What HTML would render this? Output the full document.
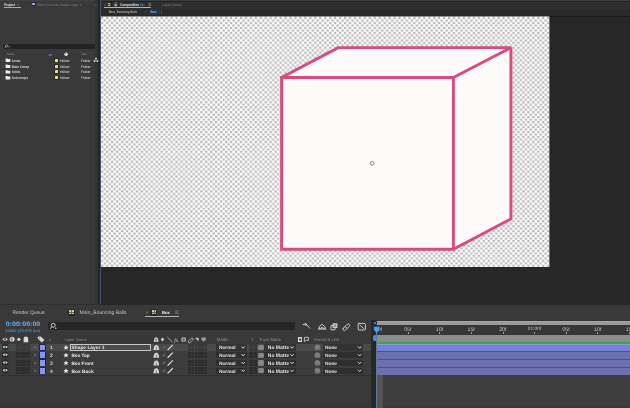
<!DOCTYPE html>
<html><head><meta charset="utf-8">
<style>
*{margin:0;padding:0;box-sizing:border-box}
html,body{width:630px;height:408px;overflow:hidden;background:#1d1d1d;font-family:"Liberation Sans",sans-serif;position:relative}
.a{position:absolute}
svg.a{overflow:visible}
.t{position:absolute;white-space:nowrap}
</style></head><body>
<div class="a" style="left:0px;top:0px;width:101px;height:305px;background:#2f2f2f;"></div>
<div class="a" style="left:0px;top:0px;width:96.5px;height:304px;background:#393939;"></div>
<div class="a" style="left:0px;top:0px;width:96.5px;height:1px;background:#424242;"></div>
<div class="a" style="left:3.5px;top:7px;width:17px;height:0.9px;background:#a8a8a8;"></div>
<div class="a" style="left:31.6px;top:1.9px;width:4px;height:4.1px;background:#23233c;border-radius:0.8px"></div>
<div class="a" style="left:32.3px;top:2.6px;width:2.6px;height:2.7px;background:#a8a8f0;border-radius:0.4px"></div>
<div class="a" style="left:2.6px;top:43.5px;width:94px;height:5.2px;background:#232323;border-radius:2px"></div>
<svg class="a" style="left:0;top:0" width="630" height="408" viewBox="0 0 630 408"><g fill="none" stroke="#c8c8c8" stroke-width="0.6"><circle cx="6.6" cy="45.9" r="1.2"/><path d="M5.8 46.8 L4.8 47.9"/></g><path d="M8.2 46.6 h1.8 l-0.9 0.9z" fill="#c8c8c8"/></svg>
<svg class="a" style="left:0;top:0" width="630" height="408" viewBox="0 0 630 408"><path d="M47.8 55.4 Q50.2 52.4 52.6 55.4z" fill="#5d86c8"/><circle cx="66.1" cy="54.3" r="1.8" fill="#e6e6e6"/><circle cx="65.4" cy="53.8" r="0.5" fill="#383838"/></svg>
<svg class="a" style="left:0;top:0" width="630" height="408" viewBox="0 0 630 408"><path d="M2.2 59.3 L3.2 60.3 L2.2 61.3" fill="none" stroke="#777" stroke-width="0.5"/></svg>
<svg class="a" style="left:0;top:0" width="630" height="408" viewBox="0 0 630 408"><path d="M5.6 58.599999999999994 h1.8 l0.5 0.5 h2.4 v2.9 h-4.7z" fill="#ececec"/></svg>
<div class="a" style="left:54.2px;top:58.099999999999994px;width:4.4px;height:4.4px;background:#26261c;border-radius:0.8px"></div>
<div class="a" style="left:54.8px;top:58.699999999999996px;width:3.2px;height:3.2px;background:#ece47c;border-radius:0.4px"></div>
<svg class="a" style="left:0;top:0" width="630" height="408" viewBox="0 0 630 408"><path d="M2.2 65.2 L3.2 66.2 L2.2 67.2" fill="none" stroke="#777" stroke-width="0.5"/></svg>
<svg class="a" style="left:0;top:0" width="630" height="408" viewBox="0 0 630 408"><path d="M5.6 64.5 h1.8 l0.5 0.5 h2.4 v2.9 h-4.7z" fill="#ececec"/></svg>
<div class="a" style="left:54.2px;top:64.0px;width:4.4px;height:4.4px;background:#26261c;border-radius:0.8px"></div>
<div class="a" style="left:54.8px;top:64.60000000000001px;width:3.2px;height:3.2px;background:#ece47c;border-radius:0.4px"></div>
<svg class="a" style="left:0;top:0" width="630" height="408" viewBox="0 0 630 408"><path d="M2.2 70.9 L3.2 71.9 L2.2 72.9" fill="none" stroke="#777" stroke-width="0.5"/></svg>
<svg class="a" style="left:0;top:0" width="630" height="408" viewBox="0 0 630 408"><path d="M5.6 70.2 h1.8 l0.5 0.5 h2.4 v2.9 h-4.7z" fill="#ececec"/></svg>
<div class="a" style="left:54.2px;top:69.7px;width:4.4px;height:4.4px;background:#26261c;border-radius:0.8px"></div>
<div class="a" style="left:54.8px;top:70.30000000000001px;width:3.2px;height:3.2px;background:#ece47c;border-radius:0.4px"></div>
<svg class="a" style="left:0;top:0" width="630" height="408" viewBox="0 0 630 408"><path d="M2.2 76.8 L3.2 77.8 L2.2 78.8" fill="none" stroke="#777" stroke-width="0.5"/></svg>
<svg class="a" style="left:0;top:0" width="630" height="408" viewBox="0 0 630 408"><path d="M5.6 76.1 h1.8 l0.5 0.5 h2.4 v2.9 h-4.7z" fill="#ececec"/></svg>
<div class="a" style="left:54.2px;top:75.6px;width:4.4px;height:4.4px;background:#26261c;border-radius:0.8px"></div>
<div class="a" style="left:54.8px;top:76.2px;width:3.2px;height:3.2px;background:#ece47c;border-radius:0.4px"></div>
<div class="a" style="left:95.2px;top:0px;width:3px;height:304px;background:#333333;"></div>
<div class="a" style="left:98.2px;top:0px;width:1.4px;height:304px;background:#1e2430;"></div>
<div class="a" style="left:99.6px;top:0px;width:1.6px;height:304px;background:#4a5468;"></div>
<svg class="a" style="left:0;top:0" width="630" height="408" viewBox="0 0 630 408"><g fill="#d8d8d8"><circle cx="96" cy="58.3" r="0.9"/><circle cx="94.5" cy="61" r="0.9"/><circle cx="97.5" cy="61" r="0.9"/></g><path d="M96 58.3 L94.5 61 L97.5 61z" fill="none" stroke="#d8d8d8" stroke-width="0.4"/></svg>
<div class="a" style="left:101px;top:0px;width:529px;height:305px;background:#272727;"></div>
<div class="a" style="left:101.2px;top:16px;width:1.3px;height:289px;background:#20242c;"></div>
<div class="a" style="left:101px;top:0px;width:529px;height:8.6px;background:#2f2f2f;"></div>
<div class="a" style="left:101px;top:0px;width:529px;height:1.1px;background:#3a3d42;"></div>
<div class="a" style="left:101px;top:1.1px;width:529px;height:0.9px;background:#232323;"></div>
<div class="a" style="left:101px;top:8.6px;width:529px;height:7px;background:#2a2a2a;"></div>
<div class="a" style="left:101px;top:15.6px;width:529px;height:0.9px;background:#171717;"></div>
<div class="a" style="left:107.8px;top:2.3px;width:4.2px;height:4.2px;background:#25231e;border-radius:0.8px"></div>
<div class="a" style="left:108.4px;top:2.9px;width:3px;height:3px;background:#bdb8a6;"></div>
<div class="a" style="left:109.75px;top:2.9px;width:0.3px;height:3px;background:#5a5548;"></div>
<div class="a" style="left:108.4px;top:4.25px;width:3px;height:0.3px;background:#5a5548;"></div>
<svg class="a" style="left:0;top:0" width="630" height="408" viewBox="0 0 630 408"><rect x="114.4" y="3.9" width="2.8" height="2.3" rx="0.3" fill="#9a9a9a"/><path d="M114.9 4 v-0.8 a0.9 0.9 0 0 1 1.8 0 v0.8" fill="none" stroke="#9a9a9a" stroke-width="0.5"/></svg>
<svg class="a" style="left:0;top:0" width="630" height="408" viewBox="0 0 630 408"><g stroke="#9a9a9a" stroke-width="0.5"><path d="M148.3 3.3 h2.8 M148.3 4.4 h2.8 M148.3 5.5 h2.8"/></g></svg>
<div class="a" style="left:104px;top:7px;width:47px;height:0.9px;background:#b4b4b4;"></div>
<div class="a" style="left:149px;top:9.6px;width:10.8px;height:4.4px;background:#1d3652;"></div>
<div class="a" style="left:160.6px;top:9.9px;width:0.7px;height:4px;background:#4a4a4a;"></div>
<svg class="a" style="left:0;top:0" width="630" height="408" viewBox="0 0 630 408"><defs><pattern id="ck" patternUnits="userSpaceOnUse" x="101.115" y="16.965" width="4.955" height="4.955"><rect x="0" y="0" width="2.25" height="2.25" fill="#b8b8b8"/><rect x="2.4775" y="2.4775" width="2.25" height="2.25" fill="#b8b8b8"/></pattern></defs><rect x="101" y="16.5" width="448.3" height="250.5" fill="#fefefe"/><rect x="101" y="16.5" width="448.3" height="250.5" fill="url(#ck)"/><polygon points="281.6,77.5 338.2,47.6 510.9,47.6 510.9,218.8 453.4,249.2 281.6,249.2" fill="#fcfbf9"/><g fill="none" stroke="#d84a80" stroke-width="2.9" stroke-linejoin="miter"><polygon points="281.6,77.5 453.4,77.5 453.4,249.2 281.6,249.2"/><polyline points="281.6,77.5 338.2,47.6 510.9,47.6 453.4,77.5"/><polyline points="510.9,47.6 510.9,218.8 453.4,249.2"/></g><circle cx="453.4" cy="77.4" r="0.9" fill="#8a6ad0"/><circle cx="510.9" cy="47.6" r="0.9" fill="#8a6ad0"/><circle cx="372.2" cy="163.3" r="1.8" fill="none" stroke="#6a6a6a" stroke-width="0.8"/></svg>
<div class="a" style="left:0px;top:305px;width:630px;height:103px;background:#393939;"></div>
<div class="a" style="left:67.8px;top:308.5px;width:7.4px;height:7.4px;background:#2a2720;border-radius:1.5px"></div>
<div class="a" style="left:69.2px;top:309.9px;width:4.6px;height:4.6px;background:#dcd2a6;border-radius:0.4px"></div>
<div class="a" style="left:71.35px;top:309.9px;width:0.3px;height:4.6px;background:#6a6450;"></div>
<div class="a" style="left:69.2px;top:312.05px;width:4.6px;height:0.3px;background:#6a6450;"></div>
<div class="a" style="left:150.3px;top:308.5px;width:7px;height:7px;background:#2a2720;border-radius:1.5px"></div>
<div class="a" style="left:151.6px;top:309.8px;width:4.4px;height:4.4px;background:#dcd2a6;border-radius:0.4px"></div>
<div class="a" style="left:153.65px;top:309.8px;width:0.3px;height:4.4px;background:#6a6450;"></div>
<div class="a" style="left:151.6px;top:311.85px;width:4.4px;height:0.3px;background:#6a6450;"></div>
<svg class="a" style="left:0;top:0" width="630" height="408" viewBox="0 0 630 408"><g stroke="#8a8a8a" stroke-width="0.6"><path d="M175 310.8 h3.6 M175 312.2 h3.6 M175 313.6 h3.6"/></g></svg>
<div class="a" style="left:145px;top:316.2px;width:34px;height:0.9px;background:#b4b4b4;"></div>
<div class="a" style="left:47.6px;top:321.8px;width:247.6px;height:8.4px;background:#262626;border-radius:1.5px"></div>
<svg class="a" style="left:0;top:0" width="630" height="408" viewBox="0 0 630 408"><g fill="none" stroke="#d8d8d8" stroke-width="0.9"><circle cx="53.2" cy="325.3" r="2"/><path d="M51.8 326.8 L50 328.8"/></g><circle cx="55.8" cy="328.2" r="0.7" fill="#d8d8d8"/></svg>
<svg class="a" style="left:0;top:0" width="630" height="408" viewBox="0 0 630 408"><g fill="none" stroke="#cdcdcd" stroke-width="1" stroke-linecap="round" stroke-linejoin="round"><path d="M303 324.4 h3.6 M305.2 323.4 l1.6 1 l-1 1.2 M306.6 324.6 l3.2 3.6"/><path d="M318.4 329 h7.4 M319.2 329 v-2.2 l2.9 -2.6 l2.9 2.6 v2.2 M320.7 328.8 a1.4 1.4 0 0 1 2.8 0"/><rect x="330.9" y="325.6" width="4.2" height="4.2" rx="0.5"/><path d="M343.4 328.2 L347.2 324.4 a1.4 1.4 0 0 1 2 2 L345.4 330.2 a1.4 1.4 0 0 1 -2 -2z M345.3 326.6 l1.5 1.5"/><rect x="358.2" y="323.4" width="7.2" height="6.6" rx="0.8"/><path d="M360 325.2 L363.6 328.4"/></g><rect x="332.6" y="323.3" width="4.8" height="4.6" rx="0.5" fill="#cdcdcd"/><path d="M333.6 325 h2.6 M333.6 326.3 h2.6" stroke="#373737" stroke-width="0.5"/></svg>
<svg class="a" style="left:0;top:0" width="630" height="408" viewBox="0 0 630 408"><g fill="#d8d8d8"><path d="M2.3 339.3 Q5.1 336.2 7.9 339.3 Q5.1 342.4 2.3 339.3z"/><circle cx="12.1" cy="339.3" r="2.5"/><circle cx="18.8" cy="339.3" r="1.6"/><path d="M23.6 342.2 v-3.4 a2.3 2.3 0 0 1 4.6 0 v3.4z"/><path d="M37.4 337.6 l1.2 -1.2 h2.2 l3.6 3.6 l-2.6 2.6 l-3.6 -3.6z"/></g><circle cx="5.1" cy="339.3" r="1" fill="#373737"/><path d="M12.1 337.2 v4.2" stroke="#373737" stroke-width="0.6"/><path d="M12.1 337.4 a1.9 1.9 0 0 0 0 3.8z" fill="#9a9a9a"/><circle cx="39.6" cy="337.9" r="0.5" fill="#373737"/></svg>
<div class="a" style="left:60px;top:336px;width:92.5px;height:7px;background:#363636;"></div>
<svg class="a" style="left:0;top:0" width="630" height="408" viewBox="0 0 630 408"><g fill="#c8c8c8"><path d="M153.9 341.9 Q154 337.2 156.2 337.2 Q158.4 337.2 158.5 341.9z"/><path d="M160.6 339.5 l1.9 -1.9 l1.9 1.9 l-1.9 1.9z"/><rect x="181.5" y="337.4" width="4.2" height="4.2" rx="0.4"/><path d="M201.4 337.4 h4.6 v2.2 l-2.3 2.3 l-2.3 -2.3z" fill="#9a9a9a"/><circle cx="196.8" cy="339.5" r="2.1"/></g><path d="M156.2 339 v2.9" stroke="#383838" stroke-width="0.6"/><rect x="182.5" y="338.4" width="2.2" height="2.2" fill="#555"/><path d="M195.3 338 a2.1 2.1 0 0 0 3 3z" fill="#383838"/><g fill="none" stroke="#c8c8c8" stroke-width="0.75"><path d="M167.4 337.2 L172.4 342"/><path d="M188.6 341 l2.6 -2.6 a1.1 1.1 0 0 1 1.6 1.6 l-2.6 2.6 a1.1 1.1 0 0 1 -1.6 -1.6z"/></g></svg>
<div class="a" style="left:298px;top:337.4px;width:4.4px;height:4.4px;background:#dadada;border:0.8px solid #dadada"></div>
<svg class="a" style="left:0;top:0" width="630" height="408" viewBox="0 0 630 408"><rect x="299.2" y="338.6" width="2" height="2" fill="#373737"/><path d="M304.4 342 v-4.6 h4 v3 h-3" fill="none" stroke="#dadada" stroke-width="0.8"/></svg>
<div class="a" style="left:0px;top:343.6px;width:372px;height:7.7px;background:#4a4a4a;"></div>
<div class="a" style="left:0px;top:351.3px;width:372px;height:0.6px;background:#303030;"></div>
<svg class="a" style="left:0;top:0" width="630" height="408" viewBox="0 0 630 408"><circle cx="5.2" cy="347.05000000000007" r="3.2" fill="#262626"/><path d="M2.6 347.05000000000007 Q5.2 344.55000000000007 7.8 347.05000000000007 Q5.2 349.55000000000007 2.6 347.05000000000007z" fill="#e4e4e4"/><ellipse cx="5.2" cy="347.05000000000007" rx="0.55" ry="1.2" fill="#222"/></svg>
<div class="a" style="left:16px;top:344.1px;width:6.5px;height:6.7px;background:#383838;"></div>
<div class="a" style="left:19.0px;top:344.1px;width:0.5px;height:6.7px;background:#414141;"></div>
<div class="a" style="left:16px;top:347.20000000000005px;width:6.5px;height:0.5px;background:#414141;"></div>
<div class="a" style="left:23px;top:344.1px;width:6.5px;height:6.7px;background:#383838;"></div>
<div class="a" style="left:26.0px;top:344.1px;width:0.5px;height:6.7px;background:#414141;"></div>
<div class="a" style="left:23px;top:347.20000000000005px;width:6.5px;height:0.5px;background:#414141;"></div>
<svg class="a" style="left:0;top:0" width="630" height="408" viewBox="0 0 630 408"><path d="M34.6 346.15000000000003 L35.9 347.45000000000005 L34.6 348.75000000000006" fill="none" stroke="#9a9a9a" stroke-width="0.7"/></svg>
<div class="a" style="left:39.2px;top:343.90000000000003px;width:6.6px;height:7.1px;background:#23233a;border-radius:0.5px"></div>
<div class="a" style="left:39.9px;top:344.6px;width:5.2px;height:5.7px;background:#8494fa;"></div>
<svg class="a" style="left:0;top:0" width="630" height="408" viewBox="0 0 630 408"><path d="M66 344.95000000000005 L66.8 346.65000000000003 L68.6 346.75000000000006 L67.2 347.95000000000005 L67.7 349.85 L66 348.85 L64.3 349.85 L64.8 347.95000000000005 L63.4 346.75000000000006 L65.2 346.65000000000003z" fill="#e6e6e6"/></svg>
<div class="a" style="left:70px;top:344.20000000000005px;width:80.7px;height:6.6px;background:#4a4a4a;border:0.75px solid #c8c8c8"></div>
<svg class="a" style="left:0;top:0" width="630" height="408" viewBox="0 0 630 408"><g fill="#d6d6d6"><path d="M153.5 350.05000000000007 Q153.7 345.05000000000007 156.3 345.05000000000007 Q158.9 345.05000000000007 159.1 350.05000000000007z"/></g><path d="M156.3 346.85 v3" stroke="#4a4a4a" stroke-width="0.6"/><path d="M161.8 347.45000000000005 l2.2 -2 l2.2 2 l-2.2 2z" fill="#585858"/><path d="M167.6 350.05000000000007 L172.8 344.95000000000005" stroke="#e6e6e6" stroke-width="1.1"/></svg>
<div class="a" style="left:188.2px;top:344.1px;width:6.2px;height:6.7px;background:#383838;"></div>
<div class="a" style="left:191.04999999999998px;top:344.1px;width:0.5px;height:6.7px;background:#414141;"></div>
<div class="a" style="left:188.2px;top:347.20000000000005px;width:6.2px;height:0.5px;background:#414141;"></div>
<div class="a" style="left:194.6px;top:344.1px;width:6.2px;height:6.7px;background:#383838;"></div>
<div class="a" style="left:197.45px;top:344.1px;width:0.5px;height:6.7px;background:#414141;"></div>
<div class="a" style="left:194.6px;top:347.20000000000005px;width:6.2px;height:0.5px;background:#414141;"></div>
<div class="a" style="left:201px;top:344.1px;width:6.2px;height:6.7px;background:#383838;"></div>
<div class="a" style="left:203.85px;top:344.1px;width:0.5px;height:6.7px;background:#414141;"></div>
<div class="a" style="left:201px;top:347.20000000000005px;width:6.2px;height:0.5px;background:#414141;"></div>
<div class="a" style="left:216px;top:344.3px;width:30.8px;height:6.3px;background:#333;border-radius:0.6px"></div>
<svg class="a" style="left:0;top:0" width="630" height="408" viewBox="0 0 630 408"><path d="M241.5 346.45000000000005 L243.2 348.25000000000006 L244.9 346.45000000000005" fill="none" stroke="#dcdcdc" stroke-width="1"/></svg>
<div class="a" style="left:248.6px;top:344.1px;width:8.6px;height:6.7px;background:#383838;"></div>
<div class="a" style="left:252.65px;top:344.1px;width:0.5px;height:6.7px;background:#414141;"></div>
<div class="a" style="left:248.6px;top:347.20000000000005px;width:8.6px;height:0.5px;background:#414141;"></div>
<div class="a" style="left:258.4px;top:344.90000000000003px;width:5.4px;height:5.2px;background:#808080;border-radius:1.2px"></div>
<svg class="a" style="left:0;top:0" width="630" height="408" viewBox="0 0 630 408"><circle cx="261.1" cy="347.45000000000005" r="1.3" fill="none" stroke="#a0a0a0" stroke-width="0.5"/></svg>
<div class="a" style="left:263.8px;top:344.3px;width:32px;height:6.3px;background:#333;border-radius:0.6px"></div>
<svg class="a" style="left:0;top:0" width="630" height="408" viewBox="0 0 630 408"><path d="M290.3 346.45000000000005 L292 348.25000000000006 L293.7 346.45000000000005" fill="none" stroke="#dcdcdc" stroke-width="1"/></svg>
<svg class="a" style="left:0;top:0" width="630" height="408" viewBox="0 0 630 408"><circle cx="317.4" cy="347.45000000000005" r="2.9" fill="#747474"/><path d="M316 347.85 a1.5 1.5 0 1 1 2.4 1" fill="none" stroke="#9a9a9a" stroke-width="0.6"/></svg>
<div class="a" style="left:322.8px;top:344.3px;width:40.6px;height:6.3px;background:#333;border-radius:0.6px"></div>
<svg class="a" style="left:0;top:0" width="630" height="408" viewBox="0 0 630 408"><path d="M357.9 346.45000000000005 L359.6 348.25000000000006 L361.3 346.45000000000005" fill="none" stroke="#dcdcdc" stroke-width="1"/></svg>
<div class="a" style="left:0px;top:351.3px;width:372px;height:7.7px;background:#3c3c3c;"></div>
<div class="a" style="left:0px;top:359.0px;width:372px;height:0.6px;background:#303030;"></div>
<svg class="a" style="left:0;top:0" width="630" height="408" viewBox="0 0 630 408"><circle cx="5.2" cy="354.75000000000006" r="3.2" fill="#262626"/><path d="M2.6 354.75000000000006 Q5.2 352.25000000000006 7.8 354.75000000000006 Q5.2 357.25000000000006 2.6 354.75000000000006z" fill="#e4e4e4"/><ellipse cx="5.2" cy="354.75000000000006" rx="0.55" ry="1.2" fill="#222"/></svg>
<div class="a" style="left:16px;top:351.8px;width:6.5px;height:6.7px;background:#2d2d2d;"></div>
<div class="a" style="left:19.0px;top:351.8px;width:0.5px;height:6.7px;background:#343434;"></div>
<div class="a" style="left:16px;top:354.90000000000003px;width:6.5px;height:0.5px;background:#343434;"></div>
<div class="a" style="left:23px;top:351.8px;width:6.5px;height:6.7px;background:#2d2d2d;"></div>
<div class="a" style="left:26.0px;top:351.8px;width:0.5px;height:6.7px;background:#343434;"></div>
<div class="a" style="left:23px;top:354.90000000000003px;width:6.5px;height:0.5px;background:#343434;"></div>
<svg class="a" style="left:0;top:0" width="630" height="408" viewBox="0 0 630 408"><path d="M34.6 353.85 L35.9 355.15000000000003 L34.6 356.45000000000005" fill="none" stroke="#9a9a9a" stroke-width="0.7"/></svg>
<div class="a" style="left:39.2px;top:351.6px;width:6.6px;height:7.1px;background:#23233a;border-radius:0.5px"></div>
<div class="a" style="left:39.9px;top:352.3px;width:5.2px;height:5.7px;background:#8494fa;"></div>
<svg class="a" style="left:0;top:0" width="630" height="408" viewBox="0 0 630 408"><path d="M66 352.65000000000003 L66.8 354.35 L68.6 354.45000000000005 L67.2 355.65000000000003 L67.7 357.55 L66 356.55 L64.3 357.55 L64.8 355.65000000000003 L63.4 354.45000000000005 L65.2 354.35z" fill="#e6e6e6"/></svg>
<svg class="a" style="left:0;top:0" width="630" height="408" viewBox="0 0 630 408"><g fill="#d6d6d6"><path d="M153.5 357.75000000000006 Q153.7 352.75000000000006 156.3 352.75000000000006 Q158.9 352.75000000000006 159.1 357.75000000000006z"/></g><path d="M156.3 354.55 v3" stroke="#3c3c3c" stroke-width="0.6"/><path d="M161.8 355.15000000000003 l2.2 -2 l2.2 2 l-2.2 2z" fill="#585858"/><path d="M167.6 357.75000000000006 L172.8 352.65000000000003" stroke="#e6e6e6" stroke-width="1.1"/></svg>
<div class="a" style="left:188.2px;top:351.8px;width:6.2px;height:6.7px;background:#2d2d2d;"></div>
<div class="a" style="left:191.04999999999998px;top:351.8px;width:0.5px;height:6.7px;background:#343434;"></div>
<div class="a" style="left:188.2px;top:354.90000000000003px;width:6.2px;height:0.5px;background:#343434;"></div>
<div class="a" style="left:194.6px;top:351.8px;width:6.2px;height:6.7px;background:#2d2d2d;"></div>
<div class="a" style="left:197.45px;top:351.8px;width:0.5px;height:6.7px;background:#343434;"></div>
<div class="a" style="left:194.6px;top:354.90000000000003px;width:6.2px;height:0.5px;background:#343434;"></div>
<div class="a" style="left:201px;top:351.8px;width:6.2px;height:6.7px;background:#2d2d2d;"></div>
<div class="a" style="left:203.85px;top:351.8px;width:0.5px;height:6.7px;background:#343434;"></div>
<div class="a" style="left:201px;top:354.90000000000003px;width:6.2px;height:0.5px;background:#343434;"></div>
<div class="a" style="left:216px;top:352.0px;width:30.8px;height:6.3px;background:#2e2e2e;border-radius:0.6px"></div>
<svg class="a" style="left:0;top:0" width="630" height="408" viewBox="0 0 630 408"><path d="M241.5 354.15000000000003 L243.2 355.95000000000005 L244.9 354.15000000000003" fill="none" stroke="#dcdcdc" stroke-width="1"/></svg>
<div class="a" style="left:248.6px;top:351.8px;width:8.6px;height:6.7px;background:#2d2d2d;"></div>
<div class="a" style="left:252.65px;top:351.8px;width:0.5px;height:6.7px;background:#343434;"></div>
<div class="a" style="left:248.6px;top:354.90000000000003px;width:8.6px;height:0.5px;background:#343434;"></div>
<div class="a" style="left:258.4px;top:352.6px;width:5.4px;height:5.2px;background:#808080;border-radius:1.2px"></div>
<svg class="a" style="left:0;top:0" width="630" height="408" viewBox="0 0 630 408"><circle cx="261.1" cy="355.15000000000003" r="1.3" fill="none" stroke="#a0a0a0" stroke-width="0.5"/></svg>
<div class="a" style="left:263.8px;top:352.0px;width:32px;height:6.3px;background:#2e2e2e;border-radius:0.6px"></div>
<svg class="a" style="left:0;top:0" width="630" height="408" viewBox="0 0 630 408"><path d="M290.3 354.15000000000003 L292 355.95000000000005 L293.7 354.15000000000003" fill="none" stroke="#dcdcdc" stroke-width="1"/></svg>
<svg class="a" style="left:0;top:0" width="630" height="408" viewBox="0 0 630 408"><circle cx="317.4" cy="355.15000000000003" r="2.9" fill="#747474"/><path d="M316 355.55 a1.5 1.5 0 1 1 2.4 1" fill="none" stroke="#9a9a9a" stroke-width="0.6"/></svg>
<div class="a" style="left:322.8px;top:352.0px;width:40.6px;height:6.3px;background:#2e2e2e;border-radius:0.6px"></div>
<svg class="a" style="left:0;top:0" width="630" height="408" viewBox="0 0 630 408"><path d="M357.9 354.15000000000003 L359.6 355.95000000000005 L361.3 354.15000000000003" fill="none" stroke="#dcdcdc" stroke-width="1"/></svg>
<div class="a" style="left:0px;top:359.1px;width:372px;height:7.7px;background:#3c3c3c;"></div>
<div class="a" style="left:0px;top:366.8px;width:372px;height:0.6px;background:#303030;"></div>
<svg class="a" style="left:0;top:0" width="630" height="408" viewBox="0 0 630 408"><circle cx="5.2" cy="362.55000000000007" r="3.2" fill="#262626"/><path d="M2.6 362.55000000000007 Q5.2 360.05000000000007 7.8 362.55000000000007 Q5.2 365.05000000000007 2.6 362.55000000000007z" fill="#e4e4e4"/><ellipse cx="5.2" cy="362.55000000000007" rx="0.55" ry="1.2" fill="#222"/></svg>
<div class="a" style="left:16px;top:359.6px;width:6.5px;height:6.7px;background:#2d2d2d;"></div>
<div class="a" style="left:19.0px;top:359.6px;width:0.5px;height:6.7px;background:#343434;"></div>
<div class="a" style="left:16px;top:362.70000000000005px;width:6.5px;height:0.5px;background:#343434;"></div>
<div class="a" style="left:23px;top:359.6px;width:6.5px;height:6.7px;background:#2d2d2d;"></div>
<div class="a" style="left:26.0px;top:359.6px;width:0.5px;height:6.7px;background:#343434;"></div>
<div class="a" style="left:23px;top:362.70000000000005px;width:6.5px;height:0.5px;background:#343434;"></div>
<svg class="a" style="left:0;top:0" width="630" height="408" viewBox="0 0 630 408"><path d="M34.6 361.65000000000003 L35.9 362.95000000000005 L34.6 364.25000000000006" fill="none" stroke="#9a9a9a" stroke-width="0.7"/></svg>
<div class="a" style="left:39.2px;top:359.40000000000003px;width:6.6px;height:7.1px;background:#23233a;border-radius:0.5px"></div>
<div class="a" style="left:39.9px;top:360.1px;width:5.2px;height:5.7px;background:#8494fa;"></div>
<svg class="a" style="left:0;top:0" width="630" height="408" viewBox="0 0 630 408"><path d="M66 360.45000000000005 L66.8 362.15000000000003 L68.6 362.25000000000006 L67.2 363.45000000000005 L67.7 365.35 L66 364.35 L64.3 365.35 L64.8 363.45000000000005 L63.4 362.25000000000006 L65.2 362.15000000000003z" fill="#e6e6e6"/></svg>
<svg class="a" style="left:0;top:0" width="630" height="408" viewBox="0 0 630 408"><g fill="#d6d6d6"><path d="M153.5 365.55000000000007 Q153.7 360.55000000000007 156.3 360.55000000000007 Q158.9 360.55000000000007 159.1 365.55000000000007z"/></g><path d="M156.3 362.35 v3" stroke="#3c3c3c" stroke-width="0.6"/><path d="M161.8 362.95000000000005 l2.2 -2 l2.2 2 l-2.2 2z" fill="#585858"/><path d="M167.6 365.55000000000007 L172.8 360.45000000000005" stroke="#e6e6e6" stroke-width="1.1"/></svg>
<div class="a" style="left:188.2px;top:359.6px;width:6.2px;height:6.7px;background:#2d2d2d;"></div>
<div class="a" style="left:191.04999999999998px;top:359.6px;width:0.5px;height:6.7px;background:#343434;"></div>
<div class="a" style="left:188.2px;top:362.70000000000005px;width:6.2px;height:0.5px;background:#343434;"></div>
<div class="a" style="left:194.6px;top:359.6px;width:6.2px;height:6.7px;background:#2d2d2d;"></div>
<div class="a" style="left:197.45px;top:359.6px;width:0.5px;height:6.7px;background:#343434;"></div>
<div class="a" style="left:194.6px;top:362.70000000000005px;width:6.2px;height:0.5px;background:#343434;"></div>
<div class="a" style="left:201px;top:359.6px;width:6.2px;height:6.7px;background:#2d2d2d;"></div>
<div class="a" style="left:203.85px;top:359.6px;width:0.5px;height:6.7px;background:#343434;"></div>
<div class="a" style="left:201px;top:362.70000000000005px;width:6.2px;height:0.5px;background:#343434;"></div>
<div class="a" style="left:216px;top:359.8px;width:30.8px;height:6.3px;background:#2e2e2e;border-radius:0.6px"></div>
<svg class="a" style="left:0;top:0" width="630" height="408" viewBox="0 0 630 408"><path d="M241.5 361.95000000000005 L243.2 363.75000000000006 L244.9 361.95000000000005" fill="none" stroke="#dcdcdc" stroke-width="1"/></svg>
<div class="a" style="left:248.6px;top:359.6px;width:8.6px;height:6.7px;background:#2d2d2d;"></div>
<div class="a" style="left:252.65px;top:359.6px;width:0.5px;height:6.7px;background:#343434;"></div>
<div class="a" style="left:248.6px;top:362.70000000000005px;width:8.6px;height:0.5px;background:#343434;"></div>
<div class="a" style="left:258.4px;top:360.40000000000003px;width:5.4px;height:5.2px;background:#808080;border-radius:1.2px"></div>
<svg class="a" style="left:0;top:0" width="630" height="408" viewBox="0 0 630 408"><circle cx="261.1" cy="362.95000000000005" r="1.3" fill="none" stroke="#a0a0a0" stroke-width="0.5"/></svg>
<div class="a" style="left:263.8px;top:359.8px;width:32px;height:6.3px;background:#2e2e2e;border-radius:0.6px"></div>
<svg class="a" style="left:0;top:0" width="630" height="408" viewBox="0 0 630 408"><path d="M290.3 361.95000000000005 L292 363.75000000000006 L293.7 361.95000000000005" fill="none" stroke="#dcdcdc" stroke-width="1"/></svg>
<svg class="a" style="left:0;top:0" width="630" height="408" viewBox="0 0 630 408"><circle cx="317.4" cy="362.95000000000005" r="2.9" fill="#747474"/><path d="M316 363.35 a1.5 1.5 0 1 1 2.4 1" fill="none" stroke="#9a9a9a" stroke-width="0.6"/></svg>
<div class="a" style="left:322.8px;top:359.8px;width:40.6px;height:6.3px;background:#2e2e2e;border-radius:0.6px"></div>
<svg class="a" style="left:0;top:0" width="630" height="408" viewBox="0 0 630 408"><path d="M357.9 361.95000000000005 L359.6 363.75000000000006 L361.3 361.95000000000005" fill="none" stroke="#dcdcdc" stroke-width="1"/></svg>
<div class="a" style="left:0px;top:366.9px;width:372px;height:7.7px;background:#3c3c3c;"></div>
<div class="a" style="left:0px;top:374.59999999999997px;width:372px;height:0.6px;background:#303030;"></div>
<svg class="a" style="left:0;top:0" width="630" height="408" viewBox="0 0 630 408"><circle cx="5.2" cy="370.35" r="3.2" fill="#262626"/><path d="M2.6 370.35 Q5.2 367.85 7.8 370.35 Q5.2 372.85 2.6 370.35z" fill="#e4e4e4"/><ellipse cx="5.2" cy="370.35" rx="0.55" ry="1.2" fill="#222"/></svg>
<div class="a" style="left:16px;top:367.4px;width:6.5px;height:6.7px;background:#2d2d2d;"></div>
<div class="a" style="left:19.0px;top:367.4px;width:0.5px;height:6.7px;background:#343434;"></div>
<div class="a" style="left:16px;top:370.5px;width:6.5px;height:0.5px;background:#343434;"></div>
<div class="a" style="left:23px;top:367.4px;width:6.5px;height:6.7px;background:#2d2d2d;"></div>
<div class="a" style="left:26.0px;top:367.4px;width:0.5px;height:6.7px;background:#343434;"></div>
<div class="a" style="left:23px;top:370.5px;width:6.5px;height:0.5px;background:#343434;"></div>
<svg class="a" style="left:0;top:0" width="630" height="408" viewBox="0 0 630 408"><path d="M34.6 369.45 L35.9 370.75 L34.6 372.05" fill="none" stroke="#9a9a9a" stroke-width="0.7"/></svg>
<div class="a" style="left:39.2px;top:367.2px;width:6.6px;height:7.1px;background:#23233a;border-radius:0.5px"></div>
<div class="a" style="left:39.9px;top:367.9px;width:5.2px;height:5.7px;background:#8494fa;"></div>
<svg class="a" style="left:0;top:0" width="630" height="408" viewBox="0 0 630 408"><path d="M66 368.25 L66.8 369.95 L68.6 370.05 L67.2 371.25 L67.7 373.15 L66 372.15 L64.3 373.15 L64.8 371.25 L63.4 370.05 L65.2 369.95z" fill="#e6e6e6"/></svg>
<svg class="a" style="left:0;top:0" width="630" height="408" viewBox="0 0 630 408"><g fill="#d6d6d6"><path d="M153.5 373.35 Q153.7 368.35 156.3 368.35 Q158.9 368.35 159.1 373.35z"/></g><path d="M156.3 370.15 v3" stroke="#3c3c3c" stroke-width="0.6"/><path d="M161.8 370.75 l2.2 -2 l2.2 2 l-2.2 2z" fill="#585858"/><path d="M167.6 373.35 L172.8 368.25" stroke="#e6e6e6" stroke-width="1.1"/></svg>
<div class="a" style="left:188.2px;top:367.4px;width:6.2px;height:6.7px;background:#2d2d2d;"></div>
<div class="a" style="left:191.04999999999998px;top:367.4px;width:0.5px;height:6.7px;background:#343434;"></div>
<div class="a" style="left:188.2px;top:370.5px;width:6.2px;height:0.5px;background:#343434;"></div>
<div class="a" style="left:194.6px;top:367.4px;width:6.2px;height:6.7px;background:#2d2d2d;"></div>
<div class="a" style="left:197.45px;top:367.4px;width:0.5px;height:6.7px;background:#343434;"></div>
<div class="a" style="left:194.6px;top:370.5px;width:6.2px;height:0.5px;background:#343434;"></div>
<div class="a" style="left:201px;top:367.4px;width:6.2px;height:6.7px;background:#2d2d2d;"></div>
<div class="a" style="left:203.85px;top:367.4px;width:0.5px;height:6.7px;background:#343434;"></div>
<div class="a" style="left:201px;top:370.5px;width:6.2px;height:0.5px;background:#343434;"></div>
<div class="a" style="left:216px;top:367.59999999999997px;width:30.8px;height:6.3px;background:#2e2e2e;border-radius:0.6px"></div>
<svg class="a" style="left:0;top:0" width="630" height="408" viewBox="0 0 630 408"><path d="M241.5 369.75 L243.2 371.55 L244.9 369.75" fill="none" stroke="#dcdcdc" stroke-width="1"/></svg>
<div class="a" style="left:248.6px;top:367.4px;width:8.6px;height:6.7px;background:#2d2d2d;"></div>
<div class="a" style="left:252.65px;top:367.4px;width:0.5px;height:6.7px;background:#343434;"></div>
<div class="a" style="left:248.6px;top:370.5px;width:8.6px;height:0.5px;background:#343434;"></div>
<div class="a" style="left:258.4px;top:368.2px;width:5.4px;height:5.2px;background:#808080;border-radius:1.2px"></div>
<svg class="a" style="left:0;top:0" width="630" height="408" viewBox="0 0 630 408"><circle cx="261.1" cy="370.75" r="1.3" fill="none" stroke="#a0a0a0" stroke-width="0.5"/></svg>
<div class="a" style="left:263.8px;top:367.59999999999997px;width:32px;height:6.3px;background:#2e2e2e;border-radius:0.6px"></div>
<svg class="a" style="left:0;top:0" width="630" height="408" viewBox="0 0 630 408"><path d="M290.3 369.75 L292 371.55 L293.7 369.75" fill="none" stroke="#dcdcdc" stroke-width="1"/></svg>
<svg class="a" style="left:0;top:0" width="630" height="408" viewBox="0 0 630 408"><circle cx="317.4" cy="370.75" r="2.9" fill="#747474"/><path d="M316 371.15 a1.5 1.5 0 1 1 2.4 1" fill="none" stroke="#9a9a9a" stroke-width="0.6"/></svg>
<div class="a" style="left:322.8px;top:367.59999999999997px;width:40.6px;height:6.3px;background:#2e2e2e;border-radius:0.6px"></div>
<svg class="a" style="left:0;top:0" width="630" height="408" viewBox="0 0 630 408"><path d="M357.9 369.75 L359.6 371.55 L361.3 369.75" fill="none" stroke="#dcdcdc" stroke-width="1"/></svg>
<div class="a" style="left:370.8px;top:319.6px;width:1.8px;height:88.4px;background:#2a2a2a;"></div>
<div class="a" style="left:372.6px;top:319.6px;width:3px;height:88.4px;background:#262626;"></div>
<div class="a" style="left:375.6px;top:319.6px;width:254.4px;height:5.4px;background:#343434;"></div>
<div class="a" style="left:376px;top:321.2px;width:254px;height:3.4px;background:#9a9a9a;"></div>
<div class="a" style="left:376px;top:321.2px;width:254px;height:0.6px;background:#a8a8a8;"></div>
<div class="a" style="left:372.6px;top:320.9px;width:4.6px;height:4.2px;background:#3f8fe6;border-radius:2px 0 0 2px;border:0.5px solid #1a2a40"></div>
<div class="a" style="left:375.6px;top:324.6px;width:254.4px;height:10px;background:#363636;"></div>
<div class="a" style="left:375.9px;top:332.4px;width:0.6px;height:1.5px;background:#a0a0a0;"></div>
<div class="a" style="left:407.55px;top:332.4px;width:0.6px;height:1.5px;background:#a0a0a0;"></div>
<div class="a" style="left:439.2px;top:332.4px;width:0.6px;height:1.5px;background:#a0a0a0;"></div>
<div class="a" style="left:470.85px;top:332.4px;width:0.6px;height:1.5px;background:#a0a0a0;"></div>
<div class="a" style="left:502.5px;top:332.4px;width:0.6px;height:1.5px;background:#a0a0a0;"></div>
<div class="a" style="left:534.15px;top:332.4px;width:0.6px;height:1.5px;background:#a0a0a0;"></div>
<div class="a" style="left:565.8px;top:332.4px;width:0.6px;height:1.5px;background:#a0a0a0;"></div>
<div class="a" style="left:597.45px;top:332.4px;width:0.6px;height:1.5px;background:#a0a0a0;"></div>
<div class="a" style="left:629.1px;top:332.4px;width:0.6px;height:1.5px;background:#a0a0a0;"></div>
<div class="a" style="left:376.3px;top:334.7px;width:253.7px;height:6.9px;background:#8c8c8c;"></div>
<div class="a" style="left:373.3px;top:334.7px;width:3.2px;height:6.7px;background:#3f8fe6;border-radius:1.5px 0 0 1.5px"></div>
<div class="a" style="left:376.3px;top:341.6px;width:253.7px;height:2px;background:#3aa846;"></div>
<div class="a" style="left:376.3px;top:343.6px;width:253.7px;height:7.7px;background:#7582d8;"></div>
<div class="a" style="left:376.3px;top:343.6px;width:253.7px;height:0.8px;background:#8a98dc;"></div>
<div class="a" style="left:376.3px;top:351.3px;width:253.7px;height:0.8px;background:#4e5080;"></div>
<div class="a" style="left:376.3px;top:352.1px;width:253.7px;height:6.9px;background:#6b70ae;"></div>
<div class="a" style="left:376.3px;top:359.1px;width:253.7px;height:0.8px;background:#4e5080;"></div>
<div class="a" style="left:376.3px;top:359.90000000000003px;width:253.7px;height:6.9px;background:#6b70ae;"></div>
<div class="a" style="left:376.3px;top:366.9px;width:253.7px;height:0.8px;background:#4e5080;"></div>
<div class="a" style="left:376.3px;top:367.7px;width:253.7px;height:7.2px;background:#6b70ae;"></div>
<div class="a" style="left:375.6px;top:375px;width:254.4px;height:33px;background:#3e3e3e;"></div>
<div class="a" style="left:0px;top:404.8px;width:371px;height:3.2px;background:#363636;"></div>
<div class="a" style="left:377px;top:404.8px;width:253px;height:3.2px;background:#3a3a3a;"></div>
<div class="a" style="left:377px;top:375px;width:6px;height:33px;background:#575450;"></div>
<div class="a" style="left:375.5px;top:334px;width:1.4px;height:74px;background:#60789a;"></div>
<svg class="a" style="left:0;top:0;will-change:transform" width="630" height="408" text-rendering="geometricPrecision" font-family="Liberation Sans"><text x="4.00" y="5.65" font-size="3.70" fill="#e2e2e2" font-weight="bold" textLength="11.00" lengthAdjust="spacingAndGlyphs">Project</text><text x="17.00" y="5.76" font-size="4.00" fill="#777">≡</text><text x="37.40" y="5.51" font-size="3.60" fill="#7a7a7a" textLength="43.90" lengthAdjust="spacingAndGlyphs">Effect Controls Shape Layer 1</text><text x="94.50" y="5.76" font-size="4.00" fill="#888">»</text><text x="6.70" y="55.40" font-size="3.30" fill="#909090" textLength="7.70" lengthAdjust="spacingAndGlyphs">Name</text><text x="81.00" y="55.40" font-size="3.30" fill="#909090" textLength="5.80" lengthAdjust="spacingAndGlyphs">Type</text><text x="11.80" y="61.61" font-size="3.60" fill="#d6d6d6" font-weight="bold" textLength="8.80" lengthAdjust="spacingAndGlyphs">Assets</text><text x="59.60" y="61.61" font-size="3.60" fill="#bdbdbd" font-weight="bold" textLength="10.00" lengthAdjust="spacingAndGlyphs">Yellow</text><text x="81.00" y="61.61" font-size="3.60" fill="#bdbdbd" font-weight="bold" textLength="9.40" lengthAdjust="spacingAndGlyphs">Folder</text><text x="11.80" y="67.51" font-size="3.60" fill="#d6d6d6" font-weight="bold" textLength="17.10" lengthAdjust="spacingAndGlyphs">Main Comp</text><text x="59.60" y="67.51" font-size="3.60" fill="#bdbdbd" font-weight="bold" textLength="10.00" lengthAdjust="spacingAndGlyphs">Yellow</text><text x="81.00" y="67.51" font-size="3.60" fill="#bdbdbd" font-weight="bold" textLength="9.40" lengthAdjust="spacingAndGlyphs">Folder</text><text x="11.80" y="73.21" font-size="3.60" fill="#d6d6d6" font-weight="bold" textLength="8.50" lengthAdjust="spacingAndGlyphs">Solids</text><text x="59.60" y="73.21" font-size="3.60" fill="#bdbdbd" font-weight="bold" textLength="10.00" lengthAdjust="spacingAndGlyphs">Yellow</text><text x="81.00" y="73.21" font-size="3.60" fill="#bdbdbd" font-weight="bold" textLength="9.40" lengthAdjust="spacingAndGlyphs">Folder</text><text x="11.80" y="79.11" font-size="3.60" fill="#d6d6d6" font-weight="bold" textLength="16.30" lengthAdjust="spacingAndGlyphs">Sub comps</text><text x="59.60" y="79.11" font-size="3.60" fill="#bdbdbd" font-weight="bold" textLength="10.00" lengthAdjust="spacingAndGlyphs">Yellow</text><text x="81.00" y="79.11" font-size="3.60" fill="#bdbdbd" font-weight="bold" textLength="9.40" lengthAdjust="spacingAndGlyphs">Folder</text><text x="104.30" y="5.79" font-size="3.80" fill="#8a8a8a">×</text><text x="120.00" y="5.65" font-size="3.70" fill="#e6e6e6" font-weight="bold" textLength="19.00" lengthAdjust="spacingAndGlyphs">Composition</text><text x="140.20" y="5.58" font-size="3.50" fill="#4a8ad4" font-weight="bold" textLength="4.40" lengthAdjust="spacingAndGlyphs">Box</text><text x="162.50" y="5.61" font-size="3.60" fill="#808080" textLength="19.20" lengthAdjust="spacingAndGlyphs">Layer (none)</text><text x="108.80" y="12.91" font-size="3.60" fill="#a8a8a8" font-weight="bold" textLength="28.20" lengthAdjust="spacingAndGlyphs">Main_Bouncing Balls</text><text x="144.80" y="12.91" font-size="3.60" fill="#8a8a8a">×</text><text x="150.50" y="12.88" font-size="3.50" fill="#80b2e8" font-weight="bold" textLength="6.20" lengthAdjust="spacingAndGlyphs">Box</text><text x="12.40" y="314.00" font-size="4.94" fill="#c4c4c4">Render Queue</text><text x="79.60" y="314.04" font-size="5.04" fill="#c4c4c4">Main_Bouncing Balls</text><text x="145.60" y="313.81" font-size="4.40" fill="#9a9a9a">×</text><text x="162.00" y="313.74" font-size="4.23" fill="#e6e6e6" font-weight="bold">Box</text><text x="5.70" y="326.40" font-size="6.30" fill="#6cb2f2" font-weight="bold" textLength="34.60" lengthAdjust="spacingAndGlyphs">0:00:00:00</text><text x="5.20" y="331.92" font-size="3.90" fill="#4488d0" font-weight="bold" textLength="35.30" lengthAdjust="spacingAndGlyphs">00000 (23.976 fps)</text><text x="49.20" y="340.71" font-size="3.60" fill="#858585">#</text><text x="64.40" y="340.89" font-size="4.10" fill="#8c8c8c">Layer Name</text><text x="174.3" y="341.9" font-size="5.4" font-style="italic" font-family="Liberation Serif" fill="#d0d0d0">fx</text><text x="216.70" y="341.02" font-size="4.44" fill="#8c8c8c">Mode</text><text x="251.30" y="340.79" font-size="3.80" fill="#a0a0a0">T</text><text x="258.90" y="340.95" font-size="4.24" fill="#8c8c8c">Track Matte</text><text x="314.20" y="340.91" font-size="4.13" fill="#8c8c8c">Parent &amp; Link</text><text x="49.90" y="349.24" font-size="4.90" fill="#d0d0d0" font-weight="bold">1</text><text x="71.50" y="349.22" font-size="4.85" fill="#e6e6e6" font-weight="bold">Shape Layer 1</text><text x="218.90" y="349.22" font-size="4.85" fill="#e2e2e2" font-weight="bold">Normal</text><text x="267.80" y="349.28" font-size="5.00" fill="#e2e2e2" font-weight="bold">No Matte</text><text x="325.00" y="349.20" font-size="4.80" fill="#e2e2e2" font-weight="bold">None</text><text x="49.90" y="356.94" font-size="4.90" fill="#d0d0d0" font-weight="bold">2</text><text x="71.50" y="356.84" font-size="4.64" fill="#e6e6e6" font-weight="bold">Box Top</text><text x="218.90" y="356.92" font-size="4.85" fill="#e2e2e2" font-weight="bold">Normal</text><text x="267.80" y="356.98" font-size="5.00" fill="#e2e2e2" font-weight="bold">No Matte</text><text x="325.00" y="356.90" font-size="4.80" fill="#e2e2e2" font-weight="bold">None</text><text x="49.90" y="364.74" font-size="4.90" fill="#d0d0d0" font-weight="bold">3</text><text x="71.50" y="364.66" font-size="4.68" fill="#e6e6e6" font-weight="bold">Box Front</text><text x="218.90" y="364.72" font-size="4.85" fill="#e2e2e2" font-weight="bold">Normal</text><text x="267.80" y="364.78" font-size="5.00" fill="#e2e2e2" font-weight="bold">No Matte</text><text x="325.00" y="364.70" font-size="4.80" fill="#e2e2e2" font-weight="bold">None</text><text x="49.90" y="372.54" font-size="4.90" fill="#d0d0d0" font-weight="bold">4</text><text x="71.50" y="372.52" font-size="4.85" fill="#e6e6e6" font-weight="bold">Box Back</text><text x="218.90" y="372.52" font-size="4.85" fill="#e2e2e2" font-weight="bold">Normal</text><text x="267.80" y="372.57" font-size="5.00" fill="#e2e2e2" font-weight="bold">No Matte</text><text x="325.00" y="372.50" font-size="4.80" fill="#e2e2e2" font-weight="bold">None</text><text x="374.75" y="330.52" font-size="5.25" fill="#c8c8c8">00f</text><text x="404.20" y="330.52" font-size="5.25" fill="#c8c8c8">05f</text><text x="435.85" y="330.52" font-size="5.25" fill="#c8c8c8">10f</text><text x="467.50" y="330.52" font-size="5.25" fill="#c8c8c8">15f</text><text x="499.15" y="330.52" font-size="5.25" fill="#c8c8c8">20f</text><text x="527.75" y="330.36" font-size="4.81" fill="#c8c8c8">01:00f</text><text x="562.45" y="330.52" font-size="5.25" fill="#c8c8c8">05f</text><text x="594.10" y="330.52" font-size="5.25" fill="#c8c8c8">10f</text><text x="625.75" y="330.52" font-size="5.25" fill="#c8c8c8">15f</text><path d="M373.6 327.2 Q373.6 326.6 374.2 326.6 H379.2 Q379.8 326.6 379.8 327.2 V329.8 L376.7 333.4 L373.6 329.8z" fill="#4aa2f2" stroke="#1c2c44" stroke-width="0.5"/></svg>
</body></html>
